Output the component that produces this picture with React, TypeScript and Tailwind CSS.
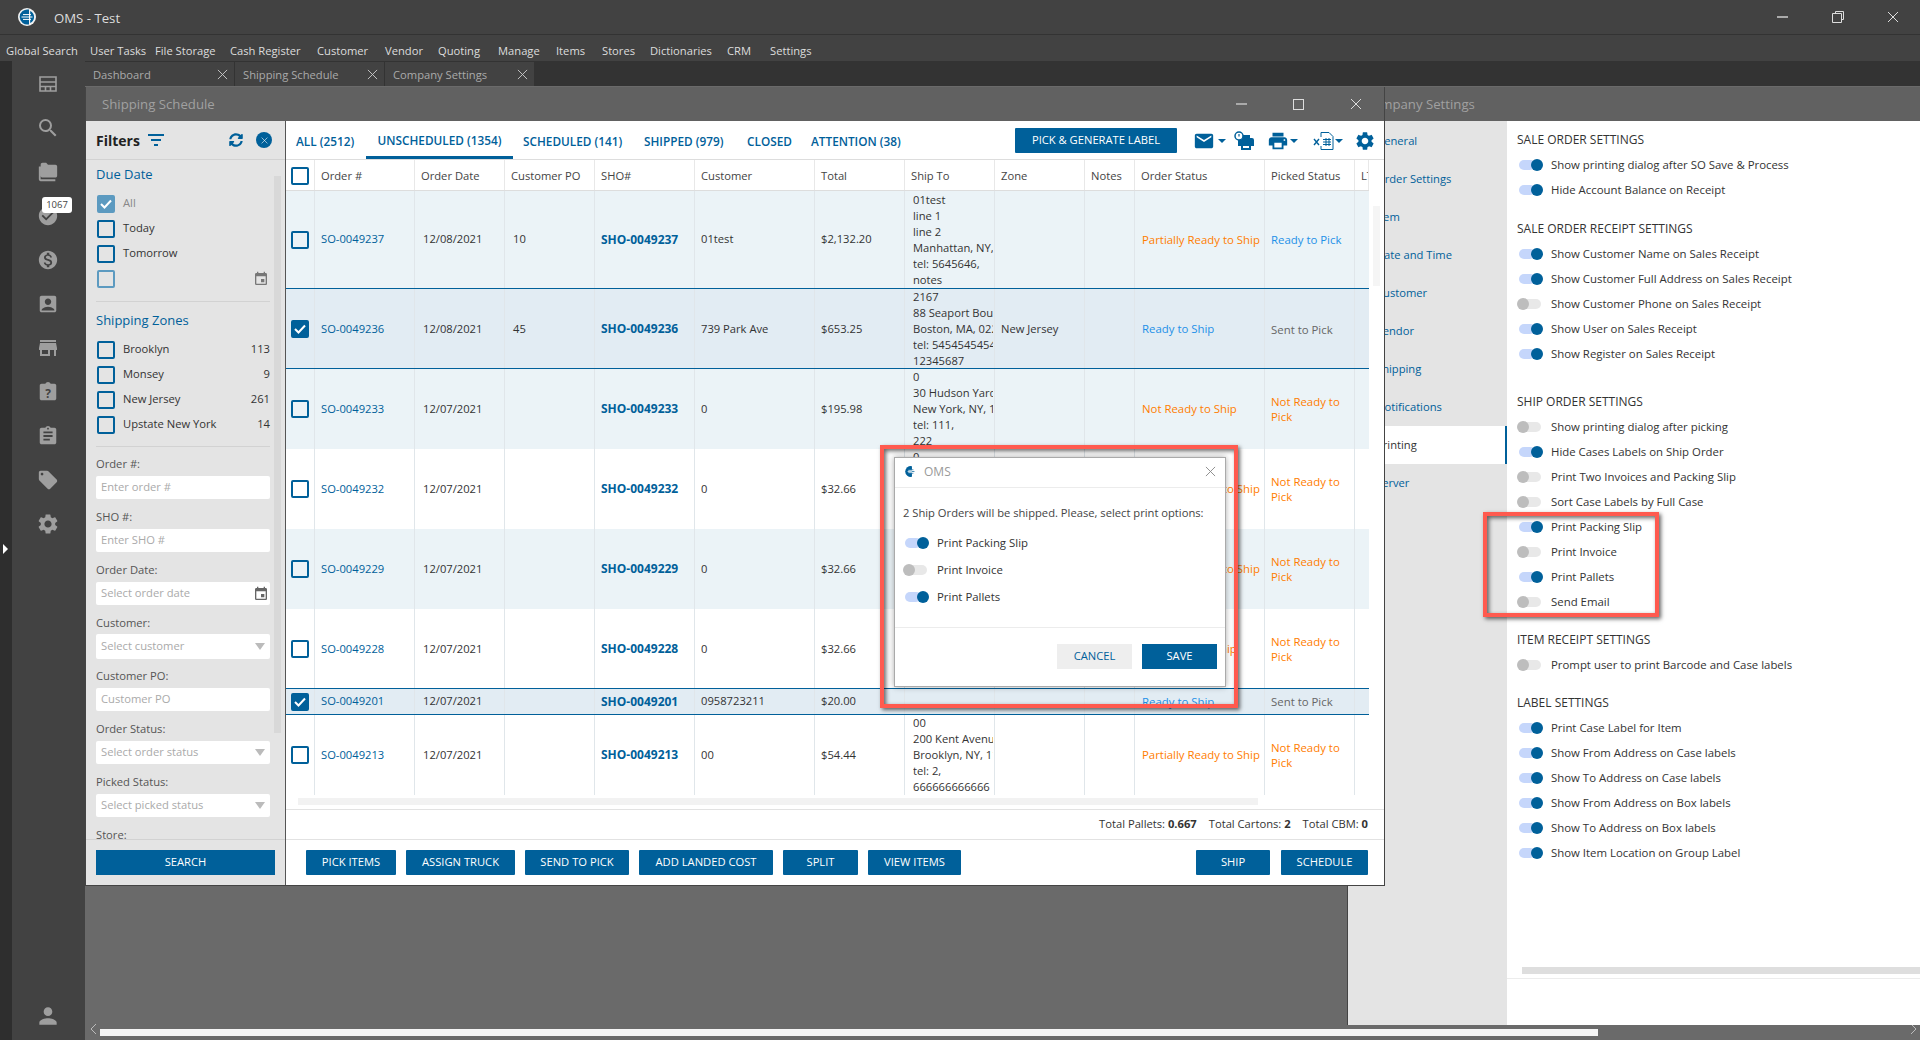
import { FaSyncAlt } from "react-icons/fa";
import {
  MdAccountBox,
  MdAssignment,
  MdCheckCircle,
  MdEmail,
  MdEvent,
  MdLocalOffer,
  MdMonetizationOn,
  MdPerson,
  MdPrint,
  MdSearch,
  MdSettings,
  MdStore,
} from "react-icons/md";

const menu = [
  { label: "Global Search", w: "w-[84px]" },
  { label: "User Tasks", w: "w-[65px]" },
  { label: "File Storage", w: "w-[75px]" },
  { label: "Cash Register", w: "w-[87px]" },
  { label: "Customer", w: "w-[68px]" },
  { label: "Vendor", w: "w-[53px]" },
  { label: "Quoting", w: "w-[60px]" },
  { label: "Manage", w: "w-[58px]" },
  { label: "Items", w: "w-[46px]" },
  { label: "Stores", w: "w-[48px]" },
  { label: "Dictionaries", w: "w-[77px]" },
  { label: "CRM", w: "w-[43px]" },
  { label: "Settings", w: "w-[60px]" },
];
const cols = "grid grid-cols-[29px_100px_90px_90px_100px_120px_90px_90px_90px_50px_130px_90px_14px]";

type Status = "orange" | "blue" | "gray";
type Row = {
  so: string;
  date: string;
  po?: string;
  sho: string;
  customer: string;
  total: string;
  ship: string[];
  zone?: string;
  order: [string, Status];
  picked: [string, Status];
  height: string;
  tint?: boolean;
  selected?: boolean;
};

const hudson = ["0", "30 Hudson Yards", "New York, NY, 10001", "tel: 111,", "222"];
const notShip: [string, Status] = ["Not Ready to Ship", "orange"];
const partShip: [string, Status] = ["Partially Ready to Ship", "orange"];
const notPick: [string, Status] = ["Not Ready to Pick", "orange"];

const rows: Row[] = [
  { so: "SO-0049237", date: "12/08/2021", po: "10", sho: "SHO-0049237", customer: "01test", total: "$2,132.20", ship: ["01test", "line 1", "line 2", "Manhattan, NY, 10001", "tel: 5645646,", "notes"], order: partShip, picked: ["Ready to Pick", "blue"], height: "h-[97px]", tint: true },
  { so: "SO-0049236", date: "12/08/2021", po: "45", sho: "SHO-0049236", customer: "739 Park Ave", total: "$653.25", ship: ["2167", "88 Seaport Boulevard", "Boston, MA, 02210", "tel: 54545454545", "12345687"], zone: "New Jersey", order: ["Ready to Ship", "blue"], picked: ["Sent to Pick", "gray"], height: "h-[81px]", selected: true },
  { so: "SO-0049233", date: "12/07/2021", sho: "SHO-0049233", customer: "0", total: "$195.98", ship: hudson, order: notShip, picked: notPick, height: "h-[80px]", tint: true },
  { so: "SO-0049232", date: "12/07/2021", sho: "SHO-0049232", customer: "0", total: "$32.66", ship: hudson, order: partShip, picked: notPick, height: "h-[80px]" },
  { so: "SO-0049229", date: "12/07/2021", sho: "SHO-0049229", customer: "0", total: "$32.66", ship: hudson, order: partShip, picked: notPick, height: "h-[80px]", tint: true },
  { so: "SO-0049228", date: "12/07/2021", sho: "SHO-0049228", customer: "0", total: "$32.66", ship: hudson, order: notShip, picked: notPick, height: "h-[79px]" },
  { so: "SO-0049201", date: "12/07/2021", sho: "SHO-0049201", customer: "0958723211", total: "$20.00", ship: [], order: ["Ready to Ship", "blue"], picked: ["Sent to Pick", "gray"], height: "h-[27px]", selected: true },
  { so: "SO-0049213", date: "12/07/2021", sho: "SHO-0049213", customer: "00", total: "$54.44", ship: ["00", "200 Kent Avenue", "Brooklyn, NY, 11249", "tel: 2,", "666666666666"], order: partShip, picked: notPick, height: "h-[80px]" },
];

const statusColor: Record<Status, string> = {
  orange: "text-[#ff7d00]",
  blue: "text-[#1e90e8]",
  gray: "text-[#666]",
};

const settings: { title: string; mt: string; items: [string, boolean][] }[] = [
  { title: "SALE ORDER SETTINGS", mt: "mt-[7px]", items: [["Show printing dialog after SO Save & Process", true], ["Hide Account Balance on Receipt", true]] },
  { title: "SALE ORDER RECEIPT SETTINGS", mt: "mt-[15px]", items: [["Show Customer Name on Sales Receipt", true], ["Show Customer Full Address on Sales Receipt", true], ["Show Customer Phone on Sales Receipt", false], ["Show User on Sales Receipt", true], ["Show Register on Sales Receipt", true]] },
  { title: "SHIP ORDER SETTINGS", mt: "mt-[24px]", items: [["Show printing dialog after picking", false], ["Hide Cases Labels on Ship Order", true], ["Print Two Invoices and Packing Slip", false], ["Sort Case Labels by Full Case", false], ["Print Packing Slip", true], ["Print Invoice", false], ["Print Pallets", true], ["Send Email", false]] },
  { title: "ITEM RECEIPT SETTINGS", mt: "mt-[14px]", items: [["Prompt user to print Barcode and Case labels", false]] },
  { title: "LABEL SETTINGS", mt: "mt-[14px]", items: [["Print Case Label for Item", true], ["Show From Address on Case labels", true], ["Show To Address on Case labels", true], ["Show From Address on Box labels", true], ["Show To Address on Box labels", true], ["Show Item Location on Group Label", true]] },
];

function Logo({ size, plain }: { size: number; plain?: boolean }) {
  return (
    <svg width={size} height={size} viewBox="0 0 18 18">
      {!plain && <circle cx="9" cy="9" r="9" fill="#f2f2f2" />}
      <path d="M11 1.6A7.6 7.6 0 1 0 11 16.4Z" fill="#00609a" />
      {!plain && <path d="M12.2 3A6.6 6.6 0 0 1 12.2 15Z" fill="#00609a" />}
      <path d="M5 6.6h8M3.5 9h11M5 11.4h8" stroke={plain ? "#00609a" : "#fff"} strokeWidth="1" />
      {plain && <path d="M6 7.4h6M6 10.6h6M5 9h6" stroke="#fff" strokeWidth="1" />}
    </svg>
  );
}

function CloseX({ size = 12, color = "#ddd" }: { size?: number; color?: string }) {
  return (
    <svg width={size} height={size} viewBox="0 0 12 12" fill="none" stroke={color} strokeWidth="1">
      <path d="M1 1l10 10M11 1L1 11" />
    </svg>
  );
}

function Check({ checked, faded }: { checked?: boolean; faded?: boolean }) {
  return (
    <span className={`flex h-[18px] w-[18px] shrink-0 items-center justify-center rounded-[2px] border-2 ${faded ? "border-[#5c9ac0]" : "border-[#00609a]"} ${checked ? (faded ? "bg-[#5c9ac0]" : "bg-[#00609a]") : ""}`}>
      {checked && (
        <svg width="12" height="10" viewBox="0 0 12 10" fill="none" stroke="#fff" strokeWidth="2">
          <path d="M1 5l3.5 3.5L11 1.5" />
        </svg>
      )}
    </span>
  );
}

function Toggle({ on, label }: { on: boolean; label: string }) {
  return (
    <div className="flex h-[25px] items-center gap-2 text-[11.4px] text-[#333]">
      <span className="relative block h-3 w-[26px] shrink-0">
        <span className={`absolute top-[1px] h-[10px] rounded-full ${on ? "left-[2px] w-[16px] bg-[#c5d6fb]" : "left-[4px] w-[20px] bg-[#e8e8e8]"}`} />
        <span className={`absolute top-0 h-3 w-3 rounded-full ${on ? "left-[14px] bg-[#00609a]" : "left-0 bg-[#bdbdbd]"}`} />
      </span>
      <span>{label}</span>
    </div>
  );
}

function WinControls({ restore }: { restore?: boolean }) {
  const slot = `flex justify-center ${restore ? "w-[55px]" : "w-[57px]"}`;
  return (
    <div className="flex items-center">
      <span className={slot}>
        <span className="h-[2px] w-[11px] bg-[#aaa]" />
      </span>
      <span className={slot}>
        {restore ? (
          <svg width="12" height="12" viewBox="0 0 12 12" fill="none" stroke="#ddd">
            <path d="M3.5 2.5V.5h8v8h-2M.5 2.5h9v9h-9z" />
          </svg>
        ) : (
          <span className="h-[11px] w-[11px] border border-[#ddd]" />
        )}
      </span>
      <span className={slot}>
        <CloseX />
      </span>
    </div>
  );
}

function FilterCheck({ label, count, checked, faded }: { label?: string; count?: string; checked?: boolean; faded?: boolean }) {
  return (
    <div className="flex h-[25px] w-[174px] items-center">
      <span className="ml-px flex">
        <Check checked={checked} faded={faded} />
      </span>
      <span className={`ml-2 flex-1 text-[11.2px] ${faded ? "text-[#888]" : "text-[#333]"}`}>{label}</span>
      {count && <span className="text-[11.2px] text-[#333]">{count}</span>}
      {faded && !label && <MdEvent size={16} className="mr-px text-[#777]" />}
    </div>
  );
}

function Field({ label, placeholder, kind, tall }: { label: string; placeholder: string; kind?: "select" | "date"; tall?: boolean }) {
  return (
    <div className={tall ? "mt-[9px] -mb-px" : "mt-[9px]"}>
      <div className="h-[18px] text-[11.2px] leading-[18px] text-[#555]">{label}</div>
      <div className={`flex w-[174px] items-center justify-between rounded-[2px] bg-white pl-[5px] text-[11.2px] text-[#aaa] ${kind === "date" ? "pr-px" : "pr-[5px]"} ${tall ? "mt-[2px] h-[25px]" : "mt-[3px] h-[23px]"}`}>
        <span>{placeholder}</span>
        {kind === "select" && <span className="h-0 w-0 border-x-[5px] border-t-[7px] border-x-transparent border-t-[#bbb]" />}
        {kind === "date" && <MdEvent size={16} className="text-[#666]" />}
      </div>
    </div>
  );
}

function FilterPanel() {
  return (
    <aside className="flex w-[200px] shrink-0 flex-col border-r border-[#555] bg-[#e4e4e4]">
      <div className="flex h-[39px] shrink-0 items-center border-b border-[#d2d2d2] pl-[10px] pr-[13px]">
        <span className="text-[14px] font-bold text-[#222]">Filters</span>
        <svg width="16" height="13" viewBox="0 0 16 13" className="ml-2" stroke="#00609a" strokeWidth="2">
          <path d="M0 1h16M3 6h10M6 11h4" />
        </svg>
        <FaSyncAlt size={14} className="ml-auto text-[#00609a]" />
        <span className="ml-[13px] flex h-4 w-4 items-center justify-center rounded-full bg-[#00609a]">
          <CloseX size={7} color="#fff" />
        </span>
      </div>
      <div className="flex h-[679px] shrink-0 overflow-hidden">
        <div className="w-[188px] shrink-0 pl-[10px]">
          <div className="flex h-[30px] items-center text-[13px] font-medium text-[#00609a]">Due Date</div>
          <div className="mt-px">
            <FilterCheck label="All" checked faded />
            <FilterCheck label="Today" />
            <FilterCheck label="Tomorrow" />
            <FilterCheck faded />
          </div>
          <div className="mt-[10px] w-[174px] border-t border-[#d2d2d2]" />
          <div className="mt-1 flex h-[30px] items-center text-[13px] font-medium text-[#00609a]">Shipping Zones</div>
          <div className="mt-px w-[174px]">
            <FilterCheck label="Brooklyn" count="113" />
            <FilterCheck label="Monsey" count="9" />
            <FilterCheck label="New Jersey" count="261" />
            <FilterCheck label="Upstate New York" count="14" />
          </div>
          <div className="mt-[9px] w-[174px] border-t border-[#d2d2d2]" />
          <div className="-mt-px">
            <Field label="Order #:" placeholder="Enter order #" />
            <Field label="SHO #:" placeholder="Enter SHO #" />
            <Field label="Order Date:" placeholder="Select order date" kind="date" />
            <Field label="Customer:" placeholder="Select customer" kind="select" tall />
            <Field label="Customer PO:" placeholder="Customer PO" />
            <Field label="Order Status:" placeholder="Select order status" kind="select" />
            <Field label="Picked Status:" placeholder="Select picked status" kind="select" />
            <div className="mt-[9px] h-[18px] text-[11.2px] leading-[18px] text-[#555]">Store:</div>
          </div>
        </div>
        <div className="mt-[16px] h-[557px] w-[7px] shrink-0 bg-[#d8d8d8]" />
      </div>
      <div className="flex-1 border-t border-[#d2d2d2] pl-[10px] pt-[10px]">
        <button className="flex h-[25px] w-[179px] items-center justify-center bg-[#00609a] pb-px text-[11.2px] text-white">SEARCH</button>
      </div>
    </aside>
  );
}

function ToolCaret({ className = "" }: { className?: string }) {
  return <span className={`h-0 w-0 border-x-[4px] border-t-[4px] border-x-transparent border-t-[#00609a] ${className}`} />;
}

function TableTabs() {
  const tabs = [
    { label: "ALL (2512)", cls: "w-[80px] pl-[10px] pt-[3px]" },
    { label: "UNSCHEDULED (1354)", cls: "w-[147px] justify-center border-b-[3px] border-[#00609a] pt-[4px]" },
    { label: "SCHEDULED (141)", cls: "ml-[10px] w-[121px] pt-[3px]" },
    { label: "SHIPPED (979)", cls: "w-[103px] pt-[3px]" },
    { label: "CLOSED", cls: "w-[64px] pt-[3px]" },
    { label: "ATTENTION (38)", cls: "w-[100px] pt-[3px]" },
  ];
  return (
    <div className="flex h-[39px] shrink-0 items-stretch border-b border-[#ddd]">
      {tabs.map((t) => (
        <span key={t.label} className={`flex shrink-0 items-center text-[11.8px] font-semibold whitespace-nowrap text-[#00609a] ${t.cls}`}>
          {t.label}
        </span>
      ))}
      <button className="ml-[104px] mt-[7px] flex h-[25px] w-[162px] shrink-0 items-center justify-center rounded-[1px] bg-[#00609a] text-[11.2px] text-white">PICK &amp; GENERATE LABEL</button>
      <div className="ml-[16px] mt-[9px] flex h-[22px] shrink-0 items-center text-[#00609a]">
        <MdEmail size={22} />
        <ToolCaret className="ml-[3px]" />
        <svg width="20" height="20" viewBox="0 0 20 20" className="ml-[8px]" fill="#00609a">
          <path d="M6 7h2V4h8v3h2a2 2 0 0 1 2 2v6h-3v4H7v-4H4V9a2 2 0 0 1 2-2zm3 8v2h6v-2z" />
          <circle cx="5" cy="5" r="4" fill="#fff" stroke="#00609a" strokeWidth="1.5" />
          <path d="M5 3v2.5" stroke="#00609a" strokeWidth="1.2" />
        </svg>
        <MdPrint size={22} className="ml-[13px]" />
        <ToolCaret className="ml-px" />
        <svg width="22" height="20" viewBox="0 0 22 20" className="ml-[15px]" fill="none" stroke="#00609a">
          <path d="M8 6V1.5h8l4 4v13H8V15" />
          <path d="M10 8.5h8M10 11h8M10 13.5h8M13 7v8M16 7v8" />
          <path d="M1 8l5 6M6 8l-5 6" strokeWidth="1.4" />
        </svg>
        <ToolCaret />
        <MdSettings size={22} className="ml-[11px]" />
      </div>
    </div>
  );
}

function OrdersTable() {
  const head = ["Order #", "Order Date", "Customer PO", "SHO#", "Customer", "Total", "Ship To", "Zone", "Notes", "Order Status", "Picked Status", "LT"];
  return (
    <div className="w-[1083px] shrink-0">
      <div className={`${cols} h-[31px] border-b border-[#ddd] text-[11.2px] text-[#444]`}>
        <div className="flex items-center justify-center border-r border-[#e8e8e8] pt-px">
          <Check />
        </div>
        {head.map((h) => (
          <div key={h} className="flex items-center overflow-hidden border-r border-[#e8e8e8] px-1.5 pt-[3px] whitespace-nowrap">
            {h}
          </div>
        ))}
      </div>
      {rows.map((r) => (
        <div key={r.so} className={`${cols} ${r.height} overflow-hidden text-[11.2px] text-[#333] ${r.selected ? "border-y border-[#00609a] bg-[#e2ecf3]" : r.tint ? "bg-[#ebf3f7]" : "bg-white"}`}>
          <div className="flex items-center justify-center border-r border-[#e0e6ea]">
            <Check checked={r.selected} />
          </div>
          <div className="flex items-center border-r border-[#e0e6ea] px-1.5 text-[#00609a]">{r.so}</div>
          <div className="flex items-center border-r border-[#e0e6ea] pl-2">{r.date}</div>
          <div className="flex items-center border-r border-[#e0e6ea] pl-2">{r.po}</div>
          <div className="flex items-center border-r border-[#e0e6ea] px-1.5 text-[12px] font-bold text-[#00609a]">{r.sho}</div>
          <div className="flex items-center border-r border-[#e0e6ea] px-1.5">{r.customer}</div>
          <div className="flex items-center border-r border-[#e0e6ea] px-1.5">{r.total}</div>
          <div className="flex items-center border-r border-[#e0e6ea] pl-2">
            <div className="w-[80px] overflow-hidden leading-[16px] whitespace-nowrap">
              {r.ship.map((line) => (
                <div key={line}>{line}</div>
              ))}
            </div>
          </div>
          <div className="flex items-center border-r border-[#e0e6ea] px-1.5">{r.zone}</div>
          <div className="border-r border-[#e0e6ea]" />
          <div className={`flex items-center border-r border-[#e0e6ea] pl-[7px] text-[11.4px] whitespace-nowrap ${statusColor[r.order[1]]}`}>{r.order[0]}</div>
          <div className={`flex items-center border-r border-[#e0e6ea] px-1.5 text-[11.4px] leading-[15px] ${statusColor[r.picked[1]]}`}>{r.picked[0]}</div>
          <div />
        </div>
      ))}
      <div className="ml-3 mt-[3px] h-[7px] w-[960px] bg-[#f2f2f2]" />
    </div>
  );
}

function ShippingWindow() {
  const left = ["PICK ITEMS", "ASSIGN TRUCK", "SEND TO PICK", "ADD LANDED COST", "SPLIT", "VIEW ITEMS"];
  const widths = ["w-[90px]", "w-[109px]", "w-[104px]", "w-[134px]", "w-[75px]", "w-[93px]"];
  return (
    <section className="absolute left-[85px] top-[87px] flex h-[799px] w-[1300px] flex-col border-x border-b border-[#444] bg-white">
      <div className="flex h-[34px] shrink-0 items-center justify-between bg-[#616161] pl-[16px]">
        <span className="pt-[2px] text-[13.2px] text-[#a0a0a0]">Shipping Schedule</span>
        <WinControls />
      </div>
      <div className="flex h-[764px]">
        <FilterPanel />
        <div className="flex min-w-0 flex-1 flex-col">
          <TableTabs />
          <div className="flex h-[649px] shrink-0 overflow-hidden">
            <OrdersTable />
            <div className="ml-1 mt-[46px] h-[80px] w-[7px] bg-[#f5f5f5]" />
          </div>
          <div className="flex h-[31px] shrink-0 items-center justify-end gap-[12px] border-y border-[#e2e2e2] pr-[16px] text-[11.2px] text-[#333]">
            <span>Total Pallets: <b>0.667</b></span>
            <span>Total Cartons: <b>2</b></span>
            <span>Total CBM: <b>0</b></span>
          </div>
          <div className="flex flex-1 items-start pl-[20px] pt-[10px] text-[11.2px] text-white">
            {left.map((b, i) => (
              <button key={b} className={`mr-[10px] flex h-[25px] items-center justify-center rounded-[1px] bg-[#00609a] pb-px ${widths[i]}`}>
                {b}
              </button>
            ))}
            <button className="ml-[225px] flex h-[25px] w-[74px] items-center justify-center rounded-[1px] bg-[#00609a] pb-px">SHIP</button>
            <button className="ml-[11px] flex h-[25px] w-[87px] items-center justify-center rounded-[1px] bg-[#00609a] pb-px">SCHEDULE</button>
          </div>
        </div>
      </div>
    </section>
  );
}

function SettingsWindow() {
  const nav = ["General", "Order Settings", "Item", "Date and Time", "Customer", "Vendor", "Shipping", "Notifications", "Printing", "Server"];
  return (
    <section className="absolute left-[1347px] top-[87px] flex h-[938px] w-[573px] flex-col border-l border-[#444] bg-white">
      <div className="flex h-[34px] shrink-0 items-center bg-[#616161] pl-[16px] pt-[2px] text-[13.2px] text-[#a0a0a0]">Company Settings</div>
      <div className="flex min-h-0 flex-1">
        <nav className="w-[159px] shrink-0 bg-[#e4e4e4] pt-px">
          {nav.map((n) => (
            <div key={n} className={`flex h-[38px] items-center pl-[28px] text-[11.2px] ${n === "Printing" ? "border-r-2 border-[#00609a] bg-white text-[#333]" : "text-[#00609a]"}`}>
              {n}
            </div>
          ))}
        </nav>
        <div className="flex min-w-0 flex-1 flex-col">
          <div className="h-[846px] shrink-0 overflow-hidden pl-[10px]">
            {settings.map((g) => (
              <div key={g.title} className={g.mt}>
                <div className="flex h-[24px] items-center text-[12px] font-medium text-[#333]">{g.title}</div>
                {g.items.map(([label, on]) => (
                  <Toggle key={label} on={on} label={label} />
                ))}
              </div>
            ))}
          </div>
          <div className="ml-[15px] h-[7px] shrink-0 bg-[#dedede]" />
          <div className="mt-1 border-t border-[#ececec]" />
        </div>
      </div>
    </section>
  );
}

function PrintDialog() {
  return (
    <div className="absolute left-[894px] top-[457px] flex h-[230px] w-[332px] flex-col border border-[#aaa] bg-white shadow-[0_0_6px_#0005]">
      <div className="flex h-[30px] shrink-0 items-center border-b border-[#ececec] pb-[2px] pl-[9px] pr-[9px]">
        <Logo size={13} plain />
        <span className="ml-[7px] flex-1 text-[12px] text-[#999]">OMS</span>
        <CloseX size={11} color="#888" />
      </div>
      <div className="h-[140px] shrink-0 border-b border-[#ececec] pl-2 pt-[15px]">
        <div className="text-[11.2px] leading-[20px] text-[#444]">2 Ship Orders will be shipped. Please, select print options:</div>
        <div className="mt-[7px] flex flex-col gap-[2px]">
          <Toggle on label="Print Packing Slip" />
          <Toggle on={false} label="Print Invoice" />
          <Toggle on label="Print Pallets" />
        </div>
      </div>
      <div className="flex flex-1 items-start justify-end gap-[10px] pr-[8px] pt-[16px] text-[11.2px]">
        <button className="h-[25px] w-[75px] bg-[#eeeeee] text-[#00609a]">CANCEL</button>
        <button className="h-[25px] w-[75px] bg-[#00609a] text-white">SAVE</button>
      </div>
    </div>
  );
}

const sideIcons = [
  <svg key="grid" width="18" height="16" viewBox="0 0 18 16" fill="none" stroke="#9e9e9e" strokeWidth="1.6">
    <path d="M1 1h16v14H1zM1 6h16M1 10.5h16M6.5 10.5V15M11.5 10.5V15" />
  </svg>,
  <MdSearch key="search" size={24} />,
  <svg key="folder" width="22" height="22" viewBox="0 0 24 24" fill="currentColor">
    <path d="M4 6H2v14c0 1.1.9 2 2 2h16v-2H4V6zm16-2h-8l-2-2H6c-1.1 0-2 .9-2 2v12c0 1.1.9 2 2 2h14c1.1 0 2-.9 2-2V6c0-1.1-.9-2-2-2z" />
  </svg>,
  <MdCheckCircle key="check" size={22} />,
  <MdMonetizationOn key="money" size={22} />,
  <MdAccountBox key="account" size={22} />,
  <MdStore key="store" size={24} />,
  <svg key="help" width="22" height="22" viewBox="0 0 24 24" fill="currentColor">
    <path d="M19 3h-4.18C14.4 1.84 13.3 1 12 1s-2.4.84-2.82 2H5c-1.1 0-2 .9-2 2v14c0 1.1.9 2 2 2h14c1.1 0 2-.9 2-2V5c0-1.1-.9-2-2-2z" />
    <text x="12" y="18" textAnchor="middle" fontSize="13" fontWeight="700" fill="#424242" fontFamily="Open Sans, sans-serif">?</text>
  </svg>,
  <MdAssignment key="assign" size={22} />,
  <MdLocalOffer key="tag" size={22} />,
  <MdSettings key="gear" size={24} />,
];

function Sidebar() {
  return (
    <div className="relative flex w-[85px] shrink-0 bg-[#424242]">
      <div className="w-3 shrink-0 bg-[#2e2e2e]" />
      <div className="flex w-[72px] flex-col items-center pt-[1px] text-[#9e9e9e]">
        {sideIcons.map((icon, i) => (
          <div key={i} className="relative flex h-[44px] w-full items-center justify-center">
            {icon}
            {i === 3 && (
              <span className="absolute left-[30px] top-[3px] flex h-4 w-[30px] items-center justify-center rounded-[3px] bg-white text-[9.5px] text-[#444]">1067</span>
            )}
          </div>
        ))}
        <div className="mt-auto mb-[11px]">
          <MdPerson size={26} />
        </div>
      </div>
      <span className="absolute left-[3px] top-[483px] h-0 w-0 border-y-[5px] border-l-[5px] border-y-transparent border-l-white" />
    </div>
  );
}

function Annotation({ className }: { className: string }) {
  return <div className={`pointer-events-none absolute border-4 border-[#ff5a4f] shadow-[2px_2px_4px_#0009,inset_2px_2px_4px_#0009] ${className}`} />;
}

export default function App() {
  return (
    <div className="relative flex h-[1040px] w-[1920px] flex-col overflow-hidden bg-[#6a6a6a] font-['Open_Sans',sans-serif]">
      <header className="flex h-[35px] shrink-0 items-center justify-between border-b border-[#333] bg-[#424242] pl-[18px] pr-0">
        <div className="flex items-center">
          <Logo size={18} />
          <span className="ml-[18px] pt-[3px] text-[13.2px] text-[#ddd]">OMS - Test</span>
        </div>
        <WinControls restore />
      </header>
      <div className="flex h-[26px] shrink-0 items-center bg-[#424242] pl-[6px] pt-[6px] text-[11.2px] text-[#ddd]">
        {menu.map((m) => (
          <span key={m.label} className={`shrink-0 whitespace-nowrap ${m.w}`}>
            {m.label}
          </span>
        ))}
      </div>
      <div className="flex min-h-0 flex-1">
        <Sidebar />
        <div className="flex min-w-0 flex-1 flex-col">
          <div className="flex h-[25px] shrink-0 items-stretch gap-px bg-[#333] pt-px">
            {["Dashboard", "Shipping Schedule", "Company Settings"].map((t) => (
              <div key={t} className="flex w-[149px] items-center justify-between bg-[#424242] pl-2 pr-[6px] text-[11.2px] text-[#aaa]">
                <span className="pt-[2px]">{t}</span>
                <CloseX size={11} color="#ccc" />
              </div>
            ))}
          </div>
          <div className="relative flex-1">
            <svg width="8" height="12" viewBox="0 0 8 12" fill="none" stroke="#bbb" className="absolute bottom-[5px] left-[5px]">
              <path d="M6 1L1 6l5 5" />
            </svg>
            <div className="absolute bottom-[4px] left-[15px] h-[7px] w-[1498px] bg-[#f5f5f5]" />
            <svg width="8" height="12" viewBox="0 0 8 12" fill="none" stroke="#bbb" className="absolute bottom-[5px] right-[3px]">
              <path d="M2 1l5 5-5 5" />
            </svg>
          </div>
        </div>
      </div>
      <SettingsWindow />
      <ShippingWindow />
      <PrintDialog />
      <Annotation className="left-[880px] top-[445px] h-[263px] w-[358px]" />
      <Annotation className="left-[1483px] top-[512px] h-[105px] w-[176px]" />
    </div>
  );
}
